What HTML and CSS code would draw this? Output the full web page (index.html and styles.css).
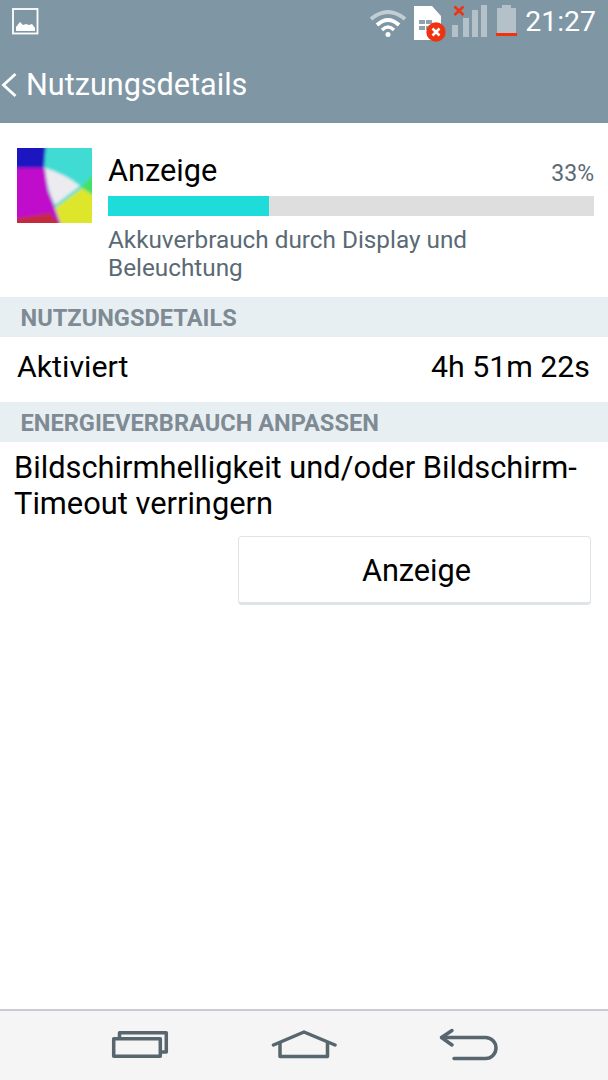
FILE: index.html
```html
<!DOCTYPE html>
<html lang="de">
<head>
<meta charset="utf-8">
<title>Nutzungsdetails</title>
<link rel="stylesheet" href="styles.css">
</head>
<body>
<div class="screen">
  <header class="top">
    <div class="status">
      <svg class="pic" width="28" height="28" viewBox="0 0 28 28"><rect x="1" y="1" width="24.500" height="24.500" fill="none" stroke="#fff" stroke-width="1.800"/><path d="M4 23v-4l4-5 3 3 3-1 3 1 3-1 3 4v3z" fill="#fff"/></svg>
      <div class="status-right">
        <svg class="wifi" width="38" height="30" viewBox="0 0 38 30"><path d="M2 11Q19 -3 36 11" fill="none" stroke="#c3ced4" stroke-width="4"/><path d="M8 17Q19 7 30 17" fill="none" stroke="#fff" stroke-width="4"/><path d="M13 22Q19 16 25 22" fill="none" stroke="#fff" stroke-width="3.500"/><circle cx="19" cy="26.500" r="2.500" fill="#fff"/></svg>
        <svg class="sim" width="33" height="38" viewBox="0 0 33 38"><path d="M1 1h18l9 10v24H1z" fill="#fff"/><path d="M6 15h6v4H6zM13 15h6v4h-6zM6 21h6v4H6zM13 21h4v4h-4z" fill="#8fa3af"/><circle cx="23" cy="27" r="9.700" fill="#f0320f"/><path d="M19.500 23.500l7 7M26.500 23.500l-7 7" stroke="#fff" stroke-width="2.500"/></svg>
        <svg class="signal" width="36" height="34" viewBox="0 0 36 34"><path d="M2.500 2.500l9 8.500M11.500 2.500l-9 8.500" stroke="#f0320f" stroke-width="2.500"/><path d="M0 21h6v12H0zM11 14h6v19h-6zM20 6h6v27h-6zM29 1h6v32h-6z" fill="#b4c1c9"/></svg>
        <svg class="battery" width="21" height="31" viewBox="0 0 21 31"><path d="M6 0h9v3h5v25H1V3h5z" fill="#b4c1c9"/><rect x="0" y="28" width="21" height="3" fill="#f0320f"/></svg>
        <span class="clock">21:27</span>
      </div>
    </div>
    <div class="actionbar">
      <svg class="back" width="17" height="26" viewBox="0 0 17 26"><path d="M14.500 2L2.500 13l12 11" fill="none" stroke="#fff" stroke-width="2.800"/></svg>
      <h1 class="title">Nutzungsdetails</h1>
    </div>
  </header>

  <section class="usage">
    <svg class="thumb" width="75" height="75" viewBox="0 0 75 75">
      <defs>
        <filter id="soft" x="-10%" y="-10%" width="120%" height="120%"><feGaussianBlur stdDeviation="1.800"/></filter>
        <clipPath id="box"><rect width="75" height="75"/></clipPath>
      </defs>
      <g clip-path="url(#box)">
        <g filter="url(#soft)">
          <rect x="-5" y="-5" width="85" height="85" fill="#40dcd4"/>
          <path d="M-5 -5H29L27 20H-5z" fill="#1c12c0"/>
          <path d="M-5 20H28L31 42 38 60 45 80H-5z" fill="#c010cc"/>
          <path d="M-5 71L33 65 46 80H-5z" fill="#c42a3c"/>
          <path d="M80 22V55L64 39z" fill="#44e06a"/>
          <path d="M38 60L65 40 80 50V80H45z" fill="#dde62c"/>
          <path d="M28 20Q48 26 63 38L38 57Q30 42 28 20z" fill="#ecebf0"/>
        </g>
      </g>
    </svg>
    <div class="usage-body">
      <div class="usage-head">
        <span class="usage-name">Anzeige</span>
        <span class="usage-pct">33%</span>
      </div>
      <div class="bar"><div class="bar-fill" style="width:33.1%"></div></div>
      <p class="usage-desc">Akkuverbrauch durch Display und Beleuchtung</p>
    </div>
  </section>

  <h2 class="section">NUTZUNGSDETAILS</h2>
  <div class="row"><span>Aktiviert</span><span>4h 51m 22s</span></div>
  <h2 class="section">ENERGIEVERBRAUCH ANPASSEN</h2>
  <p class="hint">Bildschirmhelligkeit und/oder Bildschirm-Timeout verringern</p>
  <div class="action"><button class="btn">Anzeige</button></div>

  <nav class="nav">
    <svg width="60" height="31" viewBox="0 0 60 31"><path d="M9.500 7V2.700h46.800V22H52" fill="none" stroke="#58666f" stroke-width="3.500" stroke-linejoin="round"/><rect x="3.700" y="8.700" width="46.600" height="17.600" fill="none" stroke="#58666f" stroke-width="3.500" stroke-linejoin="round"/></svg>
    <svg width="66" height="31" viewBox="0 0 66 31"><path d="M2.500 15L33 2l31 13" fill="none" stroke="#58666f" stroke-width="3.500" stroke-linecap="round" stroke-linejoin="round"/><path d="M9 12V26.500H56.500V12" fill="none" stroke="#58666f" stroke-width="3.500" stroke-linejoin="round"/></svg>
    <svg width="60" height="35" viewBox="0 0 60 35"><path d="M14 2.500L3.500 9.500 14 17" fill="none" stroke="#58666f" stroke-width="3.500" stroke-linecap="round" stroke-linejoin="round"/><path d="M4 9.500H47.500a10.500 10.500 0 0 1 0 21H16" fill="none" stroke="#58666f" stroke-width="3.500" stroke-linecap="round"/></svg>
  </nav>
</div>
</body>
</html>
```
FILE: styles.css
```css
* { box-sizing: border-box; }
html, body { margin: 0; padding: 0; }
body { font-family: Roboto, "Liberation Sans", sans-serif; background: #fff; color: #000; }
.screen { width: 608px; height: 1080px; display: flex; flex-direction: column; overflow: hidden; }

.top { height: 123px; background: #7f96a5; flex: none; }
.status { height: 46px; display: flex; justify-content: space-between; padding: 8px 12px 0 12px; }
.pic { flex: none; }
.status-right { display: flex; align-items: flex-start; margin-top: -8px; }
.wifi { margin-top: 8px; margin-right: 6px; }
.sim { margin-top: 5px; margin-right: 6px; }
.signal { margin-top: 4px; margin-right: 8px; }
.battery { margin-top: 5px; margin-right: 8px; }
.clock { color: #fff; font-size: 28.4px; line-height: 36px; margin-top: 4px; }

.actionbar { display: flex; align-items: center; height: 77px; padding: 0 0 0 1px; }
.back { flex: none; margin-right: 8px; }
.title { margin: 0; font-size: 30.6px; font-weight: 400; color: #fff; }

.usage { height: 174px; display: flex; padding: 25px 14px 0 17px; flex: none; }
.thumb { flex: none; margin-right: 16px; }
.usage-body { flex: 1; min-width: 0; }
.usage-head { display: flex; justify-content: space-between; align-items: baseline; height: 48px; line-height: 46px; }
.usage-name { font-size: 30.7px; }
.usage-pct { font-size: 23px; color: #5a6a75; }
.bar { height: 20px; background: #dedede; }
.bar-fill { height: 100%; background: #1edcda; }
.usage-desc { margin: 10px 0 0; font-size: 24.3px; line-height: 28px; color: #5a6a75; }

.section { margin: 0; height: 40px; flex: none; background: #e8eff2; padding-left: 20.5px; font-size: 23.6px; line-height: 43px; font-weight: 700; color: #7e8b94; }
.row { height: 65px; flex: none; display: flex; justify-content: space-between; align-items: center; padding: 0 18px 7px 17px; font-size: 30.3px; }

.hint { margin: 8px 0 0; padding: 0 14px; font-size: 30.8px; line-height: 35.5px; }
.action { display: flex; justify-content: flex-end; padding: 15px 17px 0 0; }
.btn { width: 353px; height: 69px; background: #fff; border: 1px solid #dfe5e7; border-bottom: 3px solid #dfe5e7; border-radius: 4px; font-family: inherit; font-size: 30.7px; color: #000; padding: 2px 0 0 4px; }

.nav { margin-top: auto; height: 71px; flex: none; background: #f5f5f5; border-top: 2px solid #c8ccd2; display: flex; justify-content: space-between; align-items: center; padding: 0 110px; }
```
